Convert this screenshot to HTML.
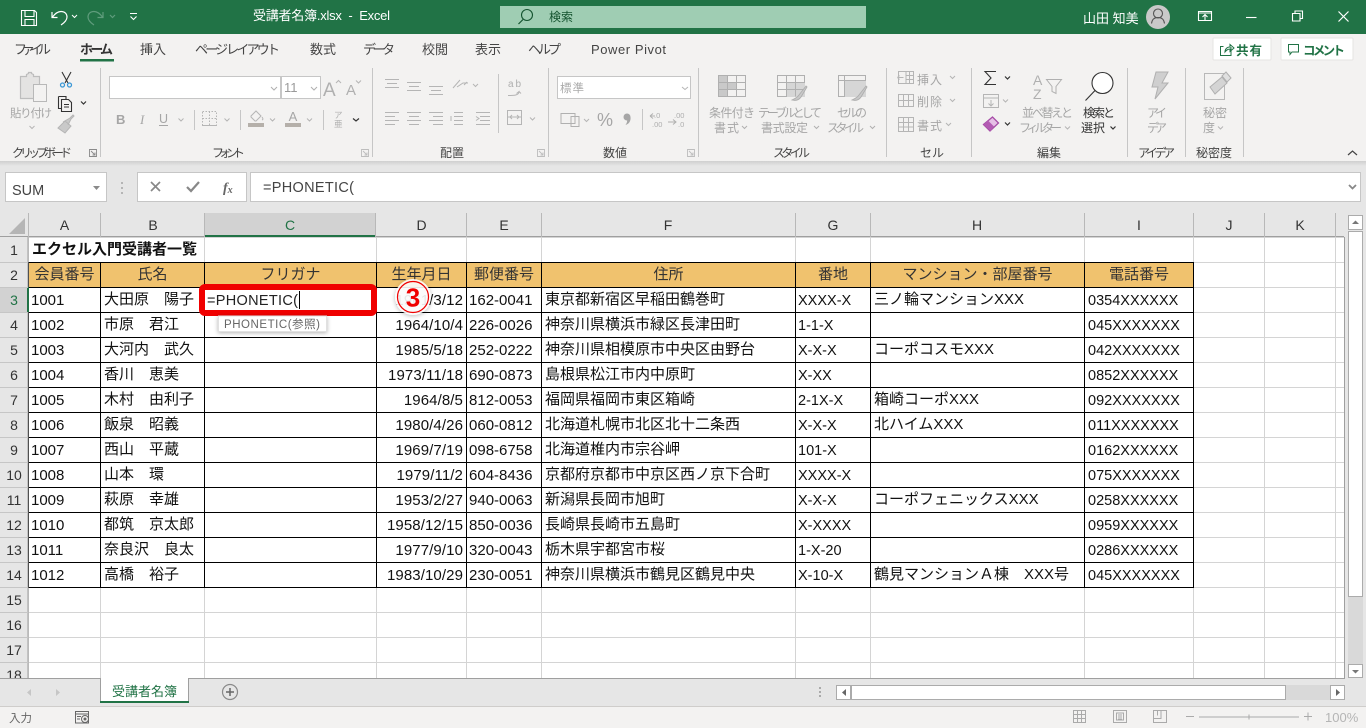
<!DOCTYPE html>
<html lang="ja"><head><meta charset="utf-8"><title>受講者名簿.xlsx - Excel</title>
<style>
html,body{margin:0;padding:0;width:1366px;height:728px;overflow:hidden;background:#e6e6e6}
body{position:relative;font-family:"Liberation Sans","Noto Sans CJK JP",sans-serif}
.abs{position:absolute}
#gridwrap{position:absolute;left:28px;top:237px;width:1316px;height:441px;overflow:hidden;background:#fff}
table{border-collapse:collapse;table-layout:fixed;width:1316px;font:15px "Liberation Sans","Noto Sans CJK JP",sans-serif;color:#111}
td{height:24px;padding:0 0 0 3px;border:1px solid #d4d4d4;white-space:nowrap;overflow:hidden;line-height:24px;box-sizing:border-box}
tr{height:25px}
.k td{border-color:#000}
.k td.g{border-color:#d4d4d4}
td.b{border-bottom-color:#000}
.h td{background:#f0c26e;text-align:center;color:#333;padding:0}
.n{font-size:15px;padding:2px 0 0 2px;line-height:22px}
.x{font-size:14.5px;padding:2px 0 0 2px;line-height:22px}
.d{text-align:right;padding:2px 3px 0 0;font-size:15px;line-height:22px;letter-spacing:.1px}
.t{font-size:14.5px;padding-top:2px;line-height:22px}
svg text{font-family:"Liberation Sans","Noto Sans CJK JP",sans-serif}
</style></head><body>

<div id="gridwrap">
<table>
<colgroup><col style="width:72px"><col style="width:104px"><col style="width:172px"><col style="width:90px"><col style="width:75px"><col style="width:254px"><col style="width:75px"><col style="width:214px"><col style="width:109px"><col style="width:71px"><col style="width:71px"><col style="width:9px"></colgroup>
<tr><td colspan="2" class="b" style="font-weight:bold;font-size:15px">エクセル入門受講者一覧</td><td class="b"></td><td class="b"></td><td class="b"></td><td class="b"></td><td class="b"></td><td class="b"></td><td class="b"></td><td></td><td></td><td></td></tr>
<tr class="k h"><td>会員番号</td><td>氏名</td><td>フリガナ</td><td>生年月日</td><td>郵便番号</td><td>住所</td><td>番地</td><td>マンション・部屋番号</td><td>電話番号</td><td class="g" style="background:#fff"></td><td class="g" style="background:#fff"></td><td class="g" style="background:#fff"></td></tr>
<tr class="k"><td class="n">1001</td><td>大田原　陽子</td><td></td><td class="d">1961/3/12</td><td class="n">162-0041</td><td>東京都新宿区早稲田鶴巻町</td><td class="x">XXXX-X</td><td>三ノ輪マンションXXX</td><td class="t">0354XXXXXX</td><td class="g"></td><td class="g"></td><td class="g"></td></tr>
<tr class="k"><td class="n">1002</td><td>市原　君江</td><td></td><td class="d">1964/10/4</td><td class="n">226-0026</td><td>神奈川県横浜市緑区長津田町</td><td class="x">1-1-X</td><td></td><td class="t">045XXXXXXX</td><td class="g"></td><td class="g"></td><td class="g"></td></tr>
<tr class="k"><td class="n">1003</td><td>大河内　武久</td><td></td><td class="d">1985/5/18</td><td class="n">252-0222</td><td>神奈川県相模原市中央区由野台</td><td class="x">X-X-X</td><td>コーポコスモXXX</td><td class="t">042XXXXXXX</td><td class="g"></td><td class="g"></td><td class="g"></td></tr>
<tr class="k"><td class="n">1004</td><td>香川　恵美</td><td></td><td class="d">1973/11/18</td><td class="n">690-0873</td><td>島根県松江市内中原町</td><td class="x">X-XX</td><td></td><td class="t">0852XXXXXX</td><td class="g"></td><td class="g"></td><td class="g"></td></tr>
<tr class="k"><td class="n">1005</td><td>木村　由利子</td><td></td><td class="d">1964/8/5</td><td class="n">812-0053</td><td>福岡県福岡市東区箱崎</td><td class="x">2-1X-X</td><td>箱崎コーポXXX</td><td class="t">092XXXXXXX</td><td class="g"></td><td class="g"></td><td class="g"></td></tr>
<tr class="k"><td class="n">1006</td><td>飯泉　昭義</td><td></td><td class="d">1980/4/26</td><td class="n">060-0812</td><td>北海道札幌市北区北十二条西</td><td class="x">X-X-X</td><td>北ハイムXXX</td><td class="t">011XXXXXXX</td><td class="g"></td><td class="g"></td><td class="g"></td></tr>
<tr class="k"><td class="n">1007</td><td>西山　平蔵</td><td></td><td class="d">1969/7/19</td><td class="n">098-6758</td><td>北海道椎内市宗谷岬</td><td class="x">101-X</td><td></td><td class="t">0162XXXXXX</td><td class="g"></td><td class="g"></td><td class="g"></td></tr>
<tr class="k"><td class="n">1008</td><td>山本　環</td><td></td><td class="d">1979/11/2</td><td class="n">604-8436</td><td>京都府京都市中京区西ノ京下合町</td><td class="x">XXXX-X</td><td></td><td class="t">075XXXXXXX</td><td class="g"></td><td class="g"></td><td class="g"></td></tr>
<tr class="k"><td class="n">1009</td><td>萩原　幸雄</td><td></td><td class="d">1953/2/27</td><td class="n">940-0063</td><td>新潟県長岡市旭町</td><td class="x">X-X-X</td><td>コーポフェニックスXXX</td><td class="t">0258XXXXXX</td><td class="g"></td><td class="g"></td><td class="g"></td></tr>
<tr class="k"><td class="n">1010</td><td>都筑　京太郎</td><td></td><td class="d">1958/12/15</td><td class="n">850-0036</td><td>長崎県長崎市五島町</td><td class="x">X-XXXX</td><td></td><td class="t">0959XXXXXX</td><td class="g"></td><td class="g"></td><td class="g"></td></tr>
<tr class="k"><td class="n">1011</td><td>奈良沢　良太</td><td></td><td class="d">1977/9/10</td><td class="n">320-0043</td><td>栃木県宇都宮市桜</td><td class="x">1-X-20</td><td></td><td class="t">0286XXXXXX</td><td class="g"></td><td class="g"></td><td class="g"></td></tr>
<tr class="k"><td class="n">1012</td><td>高橋　裕子</td><td></td><td class="d">1983/10/29</td><td class="n">230-0051</td><td>神奈川県横浜市鶴見区鶴見中央</td><td class="x">X-10-X</td><td>鶴見マンションＡ棟　XXX号</td><td class="t">045XXXXXXX</td><td class="g"></td><td class="g"></td><td class="g"></td></tr>
<tr><td></td><td></td><td></td><td></td><td></td><td></td><td></td><td></td><td></td><td></td><td></td><td></td></tr>
<tr><td></td><td></td><td></td><td></td><td></td><td></td><td></td><td></td><td></td><td></td><td></td><td></td></tr>
<tr><td></td><td></td><td></td><td></td><td></td><td></td><td></td><td></td><td></td><td></td><td></td><td></td></tr>
<tr><td></td><td></td><td></td><td></td><td></td><td></td><td></td><td></td><td></td><td></td><td></td><td></td></tr>
</table>
</div>

<svg class="abs" style="left:0;top:0" width="1366" height="728" viewBox="0 0 1366 728">
<defs>
<linearGradient id="sh" x1="0" y1="0" x2="0" y2="1"><stop offset="0" stop-color="#cfcfcf"/><stop offset="1" stop-color="#e6e6e6"/></linearGradient>
<filter id="ds" x="-30%" y="-30%" width="160%" height="160%"><feDropShadow dx="0" dy="1" stdDeviation="2" flood-color="#000" flood-opacity=".3"/></filter>
</defs>

<!-- title bar -->
<rect width="1366" height="34" fill="#217346"/>
<g fill="none" stroke="#fff" stroke-width="1.1">
<path d="M21.5 10.500h13l2 2v13h-15zM25 10.500v6h9v-6M25 25.500v-6h9v6"/>
<path d="M52 12v5.500h5.500M52.500 17c3-4 6-5.500 8.500-5.500 4 0 6 2.500 6 5.500 0 3.500-3 6-6 8" stroke-width="1.2"/>
<path d="M72 15l2.500 2.500 2.500-2.500" stroke-width="1"/>
<path d="M103 12v5.500h-5.500M102.500 17c-3-4-6-5.500-8.500-5.500-4 0-6 2.500-6 5.500 0 3.500 3 6 6 8M110 15l2.500 2.500 2.500-2.500" stroke="#5f9c7c" stroke-width="1.2"/>
<path d="M130 13.500h7M130.500 16.500l3 3 3-3"/>
</g>
<text x="253" y="20" font-size="13" fill="#fff" textLength="137">受講者名簿.xlsx&#160;&#160;-&#160;&#160;Excel</text>
<rect x="500" y="6" width="366" height="22" fill="#9fcdb3"/>
<circle cx="527" cy="15" r="5.500" fill="none" stroke="#14532f" stroke-width="1.1"/><path d="M523 19.500l-4.500 4.500" stroke="#14532f" stroke-width="1.2"/>
<text x="549" y="21" font-size="12" fill="#14532f" textLength="24">検索</text>
<text x="1083" y="23" font-size="13" fill="#fff">山田&#160;知美</text>
<circle cx="1158" cy="17" r="12" fill="#c9c9c9"/>
<circle cx="1158" cy="13.500" r="4.500" fill="none" stroke="#555" stroke-width="1.1"/><path d="M1151.500 23.500c.5-4 3-6 6.500-6s6 2 6.500 6" fill="none" stroke="#555" stroke-width="1.1"/>
<g fill="none" stroke="#fff" stroke-width="1.1">
<path d="M1198.500 11.500h13v9h-13zM1198.500 13h13M1205 20v-5M1202.500 17l2.500-2.500 2.500 2.500"/>
<path d="M1246 17.500h10.500"/>
<path d="M1292.500 13.500h7.500v7.500h-7.500zM1295 13.500v-2.500h7.500v7.500h-2.500"/>
<path d="M1338.500 11.500l10 10M1348.500 11.500l-10 10" stroke-width="1.2"/>
</g>

<!-- ribbon -->
<rect y="34" width="1366" height="127" fill="#f3f2f1"/>
<rect y="161" width="1366" height="5" fill="url(#sh)"/>
<g font-size="13" fill="#444">
<text x="14" y="54" textLength="37">ファイル</text>
<text x="80" y="54" textLength="33" font-weight="bold" fill="#333">ホーム</text>
<text x="140" y="54" textLength="26">挿入</text>
<text x="195" y="54" textLength="85">ページ&#160;レイアウト</text>
<text x="310" y="54" textLength="26">数式</text>
<text x="363" y="54" textLength="32">データ</text>
<text x="422" y="54" textLength="26">校閲</text>
<text x="475" y="54" textLength="26">表示</text>
<text x="528" y="54" textLength="33">ヘルプ</text>
<text x="591" y="54" font-size="13" textLength="75">Power Pivot</text>
</g>
<rect x="80" y="59" width="34" height="2.500" fill="#217346"/>

<rect x="1213" y="38" width="58" height="22" rx="1" fill="#fff" stroke="#e6e4e2"/>
<rect x="1281" y="38" width="72" height="22" rx="1" fill="#fff" stroke="#e6e4e2"/>
<path d="M1231 47v8.500h-10.500v-9h3M1225 52c0-3 2-5 5-5v-2.500l4 3.500-4 3.500v-2.500c-2 0-3.500 1-5 3z" fill="none" stroke="#217346"/>
<text x="1236" y="55" font-size="12.500" font-weight="bold" fill="#217346" textLength="26">共有</text>
<path d="M1288.500 44.500h10v7.500h-6.500l-2 2.500v-2.500h-1.500z" fill="none" stroke="#217346"/>
<text x="1303" y="55" font-size="12.500" font-weight="bold" fill="#217346" textLength="42">コメント</text>

<!-- separators -->
<g fill="#c6c6c6">
<rect x="100" y="68" width="1" height="89"/><rect x="372" y="68" width="1" height="89"/><rect x="548" y="68" width="1" height="89"/><rect x="698" y="68" width="1" height="89"/><rect x="886" y="68" width="1" height="89"/><rect x="971" y="68" width="1" height="89"/><rect x="1127" y="68" width="1" height="89"/><rect x="1185" y="68" width="1" height="89"/><rect x="1243" y="68" width="1" height="89"/>
<rect x="194" y="110" width="1" height="20"/><rect x="240" y="110" width="1" height="20"/><rect x="323" y="110" width="1" height="20"/><rect x="498" y="74" width="1" height="59"/><rect x="642" y="109" width="1" height="21"/>
</g>

<!-- group labels -->
<g font-size="12" fill="#444">
<text x="12" y="157" textLength="60">クリップボード</text>
<text x="212" y="157" textLength="33">フォント</text>
<text x="440" y="157" textLength="24">配置</text>
<text x="603" y="157" textLength="24">数値</text>
<text x="773" y="157" textLength="37">スタイル</text>
<text x="920" y="157" textLength="24">セル</text>
<text x="1037" y="157" textLength="24">編集</text>
<text x="1138" y="157" textLength="37">アイデア</text>
<text x="1196" y="157" textLength="36">秘密度</text>
</g>
<!-- launcher glyphs -->
<g fill="none" stroke="#8a8a8a" stroke-width=".9">
<path d="M89.500 149.500h7v7h-7zM91 151l4 4M95 152.500v2.500h-2.500"/>
<g stroke="#bdbdbd"><path d="M361.500 149.500h7v7h-7zM363 151l4 4M367 152.500v2.500h-2.500"/>
<path d="M537.500 149.500h7v7h-7zM539 151l4 4M543 152.500v2.500h-2.500"/>
<path d="M687.500 149.500h7v7h-7zM689 151l4 4M693 152.500v2.500h-2.500"/></g>
</g>

<!-- clipboard group -->
<path d="M20.500 76.500h6v-2l2-1v-1h3v1l2 1v2h6v22h-19z" fill="#e4e3e2" stroke="#bdbdbd" stroke-width="1.2"/>
<rect x="33.500" y="84.500" width="13" height="17" fill="#f3f2f1" stroke="#b8b8b8"/>
<text x="10" y="117" font-size="11.500" fill="#a6a6a6" textLength="42">貼り付け</text>
<path d="M29.500 126l2.500 2.500 2.500-2.500" fill="none" stroke="#b5b5b5"/>
<g fill="none" stroke="#333" stroke-width="1.1"><path d="M62 72l6 11M71 72l-6 11"/>
<circle cx="62.500" cy="85" r="2" stroke="#3b98d6" stroke-width="1.3"/><circle cx="69.500" cy="85" r="2" stroke="#3b98d6" stroke-width="1.3"/>
<path d="M58.500 96.500h7.500v3M58.500 96.500v12h3"/>
<path d="M61.500 99.500h7l3 3v9h-10z" fill="#f3f2f1"/><path d="M64 104.500h5M64 107h5"/>
<path d="M81 101.500l2.500 2.500 2.500-2.500" stroke-width="1.2"/></g>
<path d="M58 128l7-7 6 5-6 7zM63 122l7-4 3-3 1 1-3 3-3 6" fill="#c9c9c9" stroke="#b5b5b5"/>

<!-- font group -->
<rect x="109.500" y="76.500" width="171" height="22" fill="#fff" stroke="#c6c6c6"/>
<rect x="281.500" y="76.500" width="39" height="22" fill="#fff" stroke="#c6c6c6"/>
<text x="284" y="92" font-size="13" fill="#9a9a9a">11</text>
<g fill="none" stroke="#b0b0b0"><path d="M271 87l3 3 3-3M311 87l3 3 3-3"/></g>
<text x="323" y="96" font-size="19" fill="#b0b0b0">A</text>
<text x="346" y="95" font-size="15" fill="#b0b0b0">A</text>
<g fill="none" stroke="#b5b5b5"><path d="M336 83l2.500-2.500 2.500 2.500M356 80.500l2.500 2.500 2.500-2.500"/></g>
<text x="116" y="124" font-size="13" font-weight="bold" fill="#a6a6a6">B</text>
<text x="140" y="124" font-size="13" font-style="italic" fill="#a6a6a6" style="font-family:'Liberation Serif',serif">I</text>
<text x="159" y="123" font-size="12.500" fill="#a6a6a6">U</text>
<rect x="159" y="125" width="9" height="1" fill="#a6a6a6"/>
<g fill="none" stroke="#b5b5b5"><path d="M178.500 118.500l2.500 2.500 2.500-2.500M224.500 118.500l2.500 2.500 2.500-2.500M270 118.500l2.500 2.500 2.500-2.500M307 118.500l2.500 2.500 2.500-2.500"/>
<path d="M202.500 111.500h14v14h-14z" stroke-dasharray="1.500 1.500"/><path d="M209.500 111.500v14M202.500 118.500h14" stroke-dasharray="1.500 1.500"/><path d="M202 125.500h15"/>
<path d="M251 116l5-5 5 5-5 5h-1l-4-4zM262 117c1 1.500 1.500 2.500 0 3"/></g>
<rect x="248" y="123" width="16" height="4" fill="#b5b0aa"/>
<text x="293" y="121" font-size="13" fill="#a6a6a6" text-anchor="middle">A</text>
<rect x="285" y="123" width="16" height="4" fill="#b5b0aa"/>
<text x="334" y="118" font-size="8.500" fill="#b0b0b0">ア</text>
<text x="334" y="127" font-size="8.500" fill="#b0b0b0">亜</text>
<path d="M353 118.500l3 2.500 3-2.500" fill="none" stroke="#333" stroke-width="1.2"/>

<!-- alignment group -->
<g stroke="#b5b5b5" fill="none">
<path d="M385 79.500h14M387 83.500h10M385 87.500h14M407 82.500h14M409 86.500h10M407 90.500h14M429 86.500h14M431 90.500h10M429 94.500h14"/>
<path d="M385 112.500h14M385 116.500h10M385 120.500h14M385 124.500h10M407 112.500h14M409 116.500h10M407 120.500h14M409 124.500h10M429 112.500h14M433 116.500h10M429 120.500h14M433 124.500h10"/>
<path d="M454 112.500h9M454 116.500h9M454 120.500h9M454 124.500h9M451 116v5M476 112.500h14M480 116.500h10M480 120.500h10M476 124.500h14M476 116.500l3 2-3 2"/>
<path d="M453 88l7-8M457 87l6-4h5M464 85l3-3M473 84l2.500 2.500 2.500-2.500"/>
<path d="M508 95.500c6 0 11 0 11-4l-2.500 2M519 91.500l2 2"/>
<path d="M507.500 110.500h14v14h-14zM507.500 117h14M510 117l2-2M510 117l2 2M519 117l-2-2M519 117l-2 2M530 117.500l2.500 2.500 2.500-2.500"/>
</g>
<text x="508" y="87" font-size="10" fill="#aeaeae" textLength="13">ab</text>

<!-- number group -->
<rect x="557.500" y="76.500" width="133" height="22" fill="#fff" stroke="#c6c6c6"/>
<text x="560" y="92" font-size="11.500" fill="#aaa" textLength="24">標準</text>
<path d="M682 87l3 2.500 3-2.500M584 119l2.500 2.500 2.500-2.500" fill="none" stroke="#b5b5b5"/>
<path d="M561 113.500h14v10h-14zM571 116.500h8v10h-8z" fill="#f3f2f1" stroke="#b0b0b0"/>
<text x="597" y="126" font-size="18" fill="#a6a6a6">%</text>
<circle cx="627" cy="117" r="3.500" fill="#a6a6a6"/><path d="M630.500 117c.5 4-1.500 7-5 8 1.500-2 2-4 1.500-6z" fill="#a6a6a6"/>
<g font-size="7.500" fill="#aeaeae"><text x="654" y="118">.0</text><text x="652" y="127">.00</text><text x="674" y="118">.00</text><text x="678" y="127">.0</text></g>
<g fill="none" stroke="#b0b0b0"><path d="M650 116l3-2.500M650 116l3 2.500M650 116h5M668 122h8M673 119.500l3 2.500-3 2.500"/></g>

<!-- styles -->
<g fill="none" stroke="#b0b0b0" stroke-width="1">
<rect x="718.500" y="75.500" width="27" height="21" fill="#f3f2f1"/>
<rect x="777.500" y="75.500" width="27" height="21" fill="#f3f2f1"/>
<rect x="838.500" y="75.500" width="27" height="21" fill="#f3f2f1"/>
</g>
<path d="M719 76h9v7h9v7h-9v6h-9z" fill="#c9c9c9"/>
<rect x="787" y="83" width="18" height="14" fill="#d6d6d6"/>
<rect x="845" y="81" width="21" height="16" fill="#d6d6d6"/>
<g fill="none" stroke="#b0b0b0" stroke-width="1">
<path d="M718.500 82.500h27M718.500 89.500h27M727.500 75.500v21M736.500 75.500v21"/>
<path d="M777.500 82.500h27M777.500 89.500h27M786.500 75.500v21M795.500 75.500v21"/>
<path d="M838.500 80.500h27M844.500 75.500v21"/>
</g>
<g fill="#c9c9c9" stroke="#adadad" stroke-width=".9">
<path d="M792 100c2-1 5-2 7-5l7-9 1 1-6 10c-2 3-5 4-9 3z"/>
<path d="M852 100c2-1 5-2 7-5l7-9 1 1-6 10c-2 3-5 4-9 3z"/>
</g>
<g font-size="12" fill="#a6a6a6">
<text x="709" y="117" textLength="46">条件付き</text>
<text x="714" y="132" textLength="25">書式</text>
<text x="758" y="117" textLength="64">テーブルとして</text>
<text x="761" y="132" textLength="47">書式設定</text>
<text x="837" y="117" textLength="30">セルの</text>
<text x="827" y="132" textLength="37">スタイル</text>
</g>
<path d="M742 126l2.500 2.500 2.500-2.500M814 126l2.500 2.500 2.500-2.500M870 126l2.500 2.500 2.500-2.500" fill="none" stroke="#b0b0b0"/>

<!-- cells group -->
<g fill="none" stroke="#b5b5b5">
<path d="M898.500 71.500h15v12h-15zM906 71.500v12M909.500 71.500v12M906 75.500h7.500M906 79.500h7.500M897.500 77.500h6M897.500 77.500l2-2M897.500 77.500l2 2"/>
<path d="M898.500 94.500h15v12h-15zM898.500 100.500h15M903.500 94.500v12M908.500 94.500v12"/>
<path d="M898.500 117.500h15v14h-15zM898.500 122.500h15M898.500 127h15M903.500 117.500v14M908.500 117.500v14"/>
<path d="M950 76l2.500 2.500 2.500-2.500M950 99l2.500 2.500 2.500-2.500M946 123l2.500 2.500 2.500-2.500"/>
</g>
<g font-size="12" fill="#a6a6a6">
<text x="917" y="84" textLength="25">挿入</text>
<text x="917" y="106" textLength="25">削除</text>
<text x="917" y="130" textLength="25">書式</text>
</g>

<!-- editing group -->
<path d="M996 71.500h-11l6 6.500-6 6.500h11" fill="none" stroke="#333" stroke-width="1.1"/>
<path d="M1005 76.500l2.500 2.500 2.500-2.500M1005 122.500l2.500 2.500 2.500-2.500" fill="none" stroke="#333" stroke-width="1.2"/>
<path d="M983.500 94.500h15v13h-15zM983.500 98h15M991 100v6M988.500 103.500l2.500 2.500 2.500-2.500M1003 99.500l2.500 2.500 2.500-2.500M1065 126.500l2.500 2.500 2.500-2.500" fill="none" stroke="#b5b5b5"/>
<path d="M983.500 124.500l9-7.500 6 6-8.500 8z" fill="#e6bfe6" stroke="#a64ca6" stroke-width="1.3"/>
<path d="M983.500 124.500l4.500-4 6 6-3.500 4.500z" fill="#b35bb3"/>
<text x="1033" y="85" font-size="14" fill="#b0b0b0">A</text>
<text x="1033" y="99" font-size="14" fill="#b0b0b0">Z</text>
<path d="M1046.500 79.500h15l-5.500 7v7l-4-2v-5z" fill="none" stroke="#b0b0b0"/>
<g font-size="12" fill="#a6a6a6"><text x="1022" y="117" textLength="51">並べ替えと</text><text x="1019" y="132" textLength="43">フィルター</text></g>
<circle cx="1102.500" cy="83" r="10.500" fill="#fff" stroke="#333" stroke-width="1.1"/>
<path d="M1095 90.500l-9.500 10" stroke="#333" stroke-width="1.1"/>
<g font-size="12" fill="#333"><text x="1083" y="117" textLength="32">検索と</text><text x="1081" y="132" textLength="24">選択</text></g>
<path d="M1110.500 126.500l2.500 2.500 2.500-2.500" fill="none" stroke="#333" stroke-width="1.2"/>

<!-- ideas / sensitivity -->
<path d="M1156 72h12l-6 11h6l-13 16 3-12h-6z" fill="#cfcfcf" stroke="#b0b0b0"/>
<g font-size="12" fill="#a6a6a6"><text x="1147" y="117" textLength="20">アイ</text><text x="1147" y="132" textLength="20">デア</text>
<text x="1203" y="117" textLength="24">秘密</text><text x="1203" y="132" textLength="12">度</text></g>
<path d="M1218 126.500l2.500 2.500 2.500-2.500" fill="none" stroke="#b5b5b5"/>
<rect x="1204.500" y="73.500" width="20" height="26" fill="#f3f2f1" stroke="#b8b8b8"/>
<path d="M1210 87l12-10 5 6-12 11z" fill="#d4d4d4" stroke="#b0b0b0"/>
<path d="M1222 76l4-4 5 6-4 4z" fill="#e0e0e0" stroke="#b0b0b0"/>
<path d="M1348 155l4.500-4 4.500 4" fill="none" stroke="#444" stroke-width="1.2"/>

<!-- formula bar -->
<rect x="5.500" y="172.500" width="101" height="29" fill="#fff" stroke="#c6c6c6"/>
<text x="12" y="195" font-size="14.500" fill="#444">SUM</text>
<path d="M93 186h7l-3.500 4z" fill="#8a8a8a"/>
<g fill="#b5b5b5"><rect x="121" y="182" width="2" height="2"/><rect x="121" y="187" width="2" height="2"/><rect x="121" y="192" width="2" height="2"/></g>
<rect x="137.500" y="172.500" width="109" height="29" fill="#fff" stroke="#c6c6c6"/>
<path d="M151 182l9 9M160 182l-9 9" stroke="#888" stroke-width="1.7" fill="none"/>
<path d="M187 187l4 4 8-9" stroke="#888" stroke-width="2.2" fill="none"/>
<text x="223" y="192" font-size="14" font-style="italic" font-weight="bold" fill="#666" style="font-family:'Liberation Serif',serif">f<tspan font-size="10" dy="1">x</tspan></text>
<rect x="250.500" y="172.500" width="1110" height="29" fill="#fff" stroke="#c6c6c6"/>
<text x="263" y="192" font-size="14.500" fill="#444" textLength="91">=PHONETIC(</text>
<path d="M1349 185l3.500 3.500 3.500-3.500" fill="none" stroke="#888" stroke-width="1.8"/>

<!-- col headers -->
<rect y="213" width="1344" height="24" fill="#e6e6e6"/>
<rect x="205" y="213" width="171" height="24" fill="#d2d2d2"/>
<rect x="204" y="235" width="172" height="2" fill="#217346"/>
<rect x="0" y="236" width="204" height="1" fill="#9f9f9f"/><rect x="376" y="236" width="968" height="1" fill="#9f9f9f"/>
<path d="M25 218v16H9z" fill="#b5b5b5"/>
<g fill="#b8b8b8">
<rect x="28" y="213" width="1" height="24"/><rect x="100" y="213" width="1" height="24"/><rect x="204" y="213" width="1" height="24"/><rect x="375" y="213" width="1" height="24"/><rect x="466" y="213" width="1" height="24"/><rect x="541" y="213" width="1" height="24"/><rect x="795" y="213" width="1" height="24"/><rect x="870" y="213" width="1" height="24"/><rect x="1084" y="213" width="1" height="24"/><rect x="1193" y="213" width="1" height="24"/><rect x="1264" y="213" width="1" height="24"/><rect x="1335" y="213" width="1" height="24"/>
</g>
<g font-size="14" fill="#333" text-anchor="middle">
<text x="64.500" y="230">A</text><text x="153" y="230">B</text><text x="290" y="230" fill="#217346">C</text><text x="421.500" y="230">D</text><text x="504" y="230">E</text><text x="668" y="230">F</text><text x="833" y="230">G</text><text x="977" y="230">H</text><text x="1139" y="230">I</text><text x="1229" y="230">J</text><text x="1300" y="230">K</text>
</g>

<!-- row headers -->
<rect y="237" width="28" height="441" fill="#e6e6e6"/>
<rect y="288" width="27" height="24" fill="#d2d2d2"/>
<rect x="27.500" y="237" width="1" height="441" fill="#9f9f9f"/>
<rect x="27" y="287" width="2" height="25" fill="#217346"/>
<g fill="#c6c6c6"><rect y="262" width="28" height="1"/><rect y="287" width="28" height="1"/><rect y="312" width="28" height="1"/><rect y="337" width="28" height="1"/><rect y="362" width="28" height="1"/><rect y="387" width="28" height="1"/><rect y="412" width="28" height="1"/><rect y="437" width="28" height="1"/><rect y="462" width="28" height="1"/><rect y="487" width="28" height="1"/><rect y="512" width="28" height="1"/><rect y="537" width="28" height="1"/><rect y="562" width="28" height="1"/><rect y="587" width="28" height="1"/><rect y="612" width="28" height="1"/><rect y="637" width="28" height="1"/><rect y="662" width="28" height="1"/></g>
<g font-size="14" fill="#333" text-anchor="middle">
<text x="14" y="255">1</text><text x="14" y="280">2</text><text x="14" y="305" fill="#217346">3</text><text x="14" y="330">4</text><text x="14" y="355">5</text><text x="14" y="380">6</text><text x="14" y="405">7</text><text x="14" y="430">8</text><text x="14" y="455">9</text><text x="14" y="480">10</text><text x="14" y="505">11</text><text x="14" y="530">12</text><text x="14" y="555">13</text><text x="14" y="580">14</text><text x="14" y="605">15</text><text x="14" y="630">16</text><text x="14" y="655">17</text><text x="14" y="680">18</text>
</g>

<!-- grid edges -->
<rect x="1344" y="237" width="1" height="442" fill="#9f9f9f"/>
<rect x="0" y="678" width="1345" height="1" fill="#9f9f9f"/>

<!-- active cell and red box -->
<rect x="202" y="287" width="172" height="26" rx="3" fill="#fff" stroke="#f00000" stroke-width="6"/>
<text x="207" y="305" font-size="14.500" fill="#222" textLength="91">=PHONETIC(</text>
<rect x="299" y="291" width="1" height="18" fill="#000"/>
<rect x="218.500" y="316" width="108" height="15.500" fill="#fff" stroke="#e1e1e1" filter="url(#ds)"/>
<text x="224" y="328" font-size="11.500" fill="#666" textLength="96">PHONETIC(参照)</text>

<!-- circled number -->
<circle cx="413" cy="297" r="18" fill="#fff" fill-opacity=".88" filter="url(#ds)"/>
<circle cx="413" cy="297" r="15.500" fill="none" stroke="#f00000" stroke-width="1.2"/>
<text x="413" y="306.500" font-size="26" font-weight="bold" fill="#f00000" text-anchor="middle">3</text>

<!-- vertical scrollbar -->
<rect x="1345" y="213" width="21" height="466" fill="#e6e6e6"/>
<rect x="1348" y="231" width="15" height="447" fill="#d9d9d9"/>
<rect x="1348.500" y="215.500" width="14" height="14" fill="#fff" stroke="#ababab"/>
<path d="M1352 224h7l-3.500-3.500z" fill="#777"/>
<rect x="1348.500" y="231.500" width="14" height="365" fill="#fff" stroke="#ababab"/>
<rect x="1348.500" y="664.500" width="14" height="13" fill="#fff" stroke="#ababab"/>
<path d="M1352 670h7l-3.500 3.500z" fill="#777"/>

<!-- sheet tabs -->
<rect y="679" width="1366" height="27" fill="#e6e6e6"/>
<path d="M100.500 679v23.500h88v-24" fill="#fff" stroke="#9f9f9f"/>
<rect x="101" y="677" width="87" height="3" fill="#fff"/>
<rect x="100" y="701" width="89" height="2" fill="#217346"/>
<text x="112" y="696" font-size="13" fill="#217346" textLength="65">受講者名簿</text>
<path d="M31 689v7l-4-3.500zM56 689v7l4-3.500z" fill="#c6c6c6"/>
<circle cx="230" cy="692" r="7.500" fill="none" stroke="#8a8a8a" stroke-width="1.2"/>
<path d="M226 692h8M230 688v8" stroke="#666" stroke-width="1.5"/>
<g fill="#aaa"><rect x="819" y="687" width="2" height="2"/><rect x="819" y="691" width="2" height="2"/><rect x="819" y="695" width="2" height="2"/></g>
<rect x="836.500" y="685.500" width="14" height="14" fill="#fff" stroke="#ababab"/>
<path d="M846 689v7l-4-3.500z" fill="#666"/>
<rect x="851" y="685" width="494" height="15" fill="#d9d9d9"/>
<rect x="851.500" y="685.500" width="434" height="14" fill="#fff" stroke="#ababab"/>
<rect x="1330.500" y="685.500" width="14" height="14" fill="#fff" stroke="#ababab"/>
<path d="M1336 689v7l4-3.500z" fill="#666"/>

<!-- status bar -->
<rect y="706" width="1366" height="22" fill="#f3f2f1"/>
<rect y="706" width="1366" height="1" fill="#cfcdcb"/>
<text x="9" y="722" font-size="11.500" fill="#666" textLength="23">入力</text>
<path d="M75.500 711.500h13v11.500h-13zM75.500 714h13M77 716.500h4M77 719h3" fill="none" stroke="#666"/>
<circle cx="85" cy="719" r="3.500" fill="#f3f2f1" stroke="#666"/><circle cx="85" cy="719" r="1.500" fill="#666"/>
<g fill="none" stroke="#aaa">
<path d="M1073.500 710.500h12v12h-12zM1073.500 714.500h12M1073.500 718.500h12M1077.500 710.500v12M1081.500 710.500v12"/>
<path d="M1113.500 710.500h13v12h-13zM1116.500 713h7v7h-7zM1118 715h4M1118 717h4M1118 719h4"/>
<path d="M1153.500 710.500h13v12h-13zM1153.500 718.500h7.500v-8M1157.500 710.500v5"/>
<path d="M1186 716.500h8M1304 716.500h8M1308 712.500v8"/>
<path d="M1199 717h100M1249 714.500v5"/>
</g>
<text x="1325" y="722" font-size="13" fill="#b5b5b5">100%</text>
</svg>
</body></html>
